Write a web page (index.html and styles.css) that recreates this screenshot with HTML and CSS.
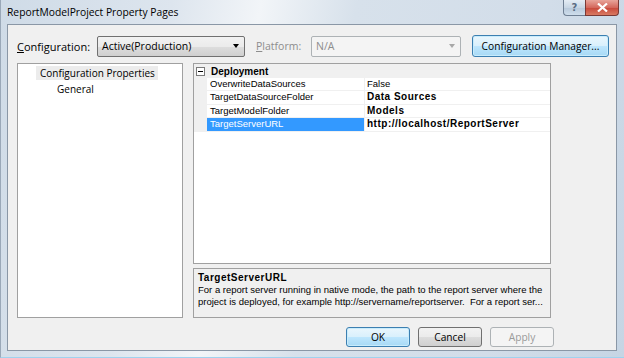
FILE: index.html
```html
<!DOCTYPE html>
<html lang="en">
<head>
    <meta charset="UTF-8">
    <meta name="viewport" content="width=device-width, initial-scale=1.0">
    <title>ReportModelProject Property Pages</title>
    <link rel="stylesheet" href="styles.css">
</head>
<body>

    <div class="window">
        <div class="titlebar">
            <span class="title">ReportModelProject Property Pages</span>
            <div class="caption-buttons">
                <span class="cap-btn help-btn">?</span>
                <span class="cap-btn close-btn">
                    <svg width="11" height="9" viewBox="0 0 11 9">
                        <path d="M1 0.5 L10 8.5 M10 0.5 L1 8.5" stroke="#fff" stroke-width="2.2" fill="none"/>
                    </svg>
                </span>
            </div>
        </div>

        <div class="client">
            <div class="config-row">
                <label class="field-label config-label"><u>C</u>onfiguration:</label>
                <div class="combo config-combo">
                    <span>Active(Production)</span>
                    <span class="combo-arrow"></span>
                </div>
                <label class="field-label platform-label disabled"><u>P</u>latform:</label>
                <div class="combo platform-combo disabled">
                    <span>N/A</span>
                    <span class="combo-arrow"></span>
                </div>
                <button class="btn btn-hot manager-btn">Configuration Manager...</button>
            </div>

            <div class="main">
                <div class="tree">
                    <div class="tree-node selected">Configuration Properties</div>
                    <div class="tree-node child">General</div>
                </div>

                <div class="right-pane">
                    <div class="prop-grid">
                        <div class="cat-row">
                            <span class="expander"></span>
                            <span class="cat-name">Deployment</span>
                        </div>
                        <div class="prop-row">
                            <span class="prop-name">OverwriteDataSources</span>
                            <span class="prop-value">False</span>
                        </div>
                        <div class="prop-row">
                            <span class="prop-name">TargetDataSourceFolder</span>
                            <span class="prop-value bold">Data Sources</span>
                        </div>
                        <div class="prop-row">
                            <span class="prop-name">TargetModelFolder</span>
                            <span class="prop-value bold">Models</span>
                        </div>
                        <div class="prop-row active">
                            <span class="prop-name">TargetServerURL</span>
                            <span class="prop-value bold">http://localhost/ReportServer</span>
                        </div>
                    </div>

                    <div class="description">
                        <div class="desc-title">TargetServerURL</div>
                        <div class="desc-text">For a report server running in native mode, the path to the report server where the</div>
                        <div class="desc-text">project is deployed, for example http://servername/reportserver.&nbsp; For a report ser...</div>
                    </div>
                </div>
            </div>

            <div class="footer">
                <button class="btn btn-hot">OK</button>
                <button class="btn">Cancel</button>
                <button class="btn disabled">Apply</button>
            </div>
        </div>
    </div>

</body>
</html>
```

FILE: styles.css
```css
body {
    margin: 0;
    font-family: "Open Sans", "Liberation Sans", sans-serif;
    font-size: 11px;
    color: #000;
}
.window {
    width: 624px;
    height: 358px;
    box-sizing: border-box;
    padding: 0 7px 6px 7px;
    background: linear-gradient(100deg, #cfdbe7 0%, #dde5ee 25%, #f2f5f8 38%, #d7e1eb 52%, #d2dde9 80%, #c6d5e4 100%);
    border-left: 1px solid #9aa8b8;
    border-bottom: 1px solid #9fd2ee;
    display: flex;
    flex-direction: column;
}
.titlebar {
    height: 24px;
    display: flex;
    align-items: flex-start;
    justify-content: space-between;
}
.title {
    margin-top: 5px;
    margin-left: -1px;
    font-size: 10.3px;
    color: #000;
}
.caption-buttons {
    display: flex;
    margin-right: -2px;
}
.cap-btn {
    height: 16px;
    display: flex;
    align-items: center;
    justify-content: center;
    border: 1px solid #6f7f93;
    border-top: none;
    box-sizing: border-box;
}
.help-btn {
    width: 22px;
    border-radius: 0 0 0 4px;
    border-right: none;
    background: linear-gradient(#e4ecf4, #c8d6e4 50%, #b7c8da 51%, #cfdeec);
    color: #5b6d84;
    font-family: "DejaVu Sans", sans-serif;
    font-weight: bold;
    font-size: 10px;
}
.close-btn {
    width: 34px;
    border-radius: 0 0 4px 0;
    border-color: #7a3a36;
    background: linear-gradient(#e8a59b, #d4685c 50%, #c7473a 51%, #d97a62);
}
.client {
    flex: 1;
    margin-left: -1px;
    background: #f0f0f0;
    border: 1px solid #8a97a6;
    display: flex;
    flex-direction: column;
}
.config-row {
    display: flex;
    align-items: center;
    height: 22px;
    margin-top: 10px;
    padding-left: 9px;
}
.field-label {
    font-size: 11px;
}
.config-label {
    width: 80px;
}
.platform-label {
    width: 55px;
    margin-left: 11px;
    font-size: 10.5px;
}
.disabled {
    color: #8d8d8d;
}
.combo {
    height: 21px;
    box-sizing: border-box;
    border: 1px solid #707070;
    border-radius: 2px;
    background: linear-gradient(#f2f2f2, #ebebeb 50%, #dddddd 51%, #cfcfcf);
    display: flex;
    align-items: center;
    justify-content: space-between;
    padding: 0 5px 0 4px;
    font-size: 10.5px;
}
.config-combo {
    width: 148px;
}
.platform-combo {
    width: 150px;
    background: #f4f4f4;
    border-color: #adb2b5;
}
.combo-arrow {
    width: 0;
    height: 0;
    border-left: 3.5px solid transparent;
    border-right: 3.5px solid transparent;
    border-top: 4px solid #000;
}
.combo.disabled .combo-arrow {
    border-top-color: #a8a8a8;
}
.btn {
    width: 64px;
    height: 20px;
    box-sizing: border-box;
    padding: 0;
    border: 1px solid #707070;
    border-radius: 3px;
    background: linear-gradient(#f2f2f2, #ebebeb 50%, #dddddd 51%, #cfcfcf);
    font-family: "Open Sans", "Liberation Sans", sans-serif;
    font-size: 10.2px;
    color: #000;
}
.btn-hot {
    border-color: #3c7fb1;
    background: linear-gradient(#eaf6fd, #d9f0fc 50%, #bee6fd 51%, #a7d9f5);
    box-shadow: inset 0 0 0 1px #c8ecfc;
}
.btn.disabled {
    border-color: #adb2b5;
    background: #f4f4f4;
    color: #9a9a9a;
}
.manager-btn {
    width: 137px;
    height: 22px;
    margin-left: 11px;
}
.main {
    display: flex;
    margin-top: 6px;
    padding-left: 9px;
    height: 255px;
}
.tree {
    width: 166px;
    box-sizing: border-box;
    border: 1px solid #a0a0a0;
    background: #fff;
    padding-top: 1px;
}
.tree-node {
    height: 14px;
    line-height: 14px;
    font-size: 10px;
    white-space: nowrap;
}
.tree-node.selected {
    display: inline-block;
    margin-left: 18px;
    padding: 0 3px 0 4px;
    background: #ececec;
}
.tree-node.child {
    padding-left: 39px;
    margin-top: 2px;
}
.right-pane {
    width: 358px;
    margin-left: 10px;
    display: flex;
    flex-direction: column;
    gap: 4px;
}
.prop-grid {
    height: 201px;
    box-sizing: border-box;
    border: 1px solid #a0a0a0;
    background: #fff;
    font-family: "Liberation Sans", Arial, sans-serif;
    font-size: 9.5px;
}
.cat-row {
    height: 14px;
    background: #f0f0f0;
    display: flex;
    align-items: center;
}
.expander {
    width: 9px;
    height: 9px;
    box-sizing: border-box;
    margin-left: 2px;
    border: 1px solid #7a7a7a;
    background: #fff;
    position: relative;
}
.expander::after {
    content: "";
    position: absolute;
    left: 1px;
    top: 3px;
    width: 5px;
    height: 1px;
    background: #000;
}
.cat-name {
    margin-left: 6px;
    font-size: 10px;
    font-weight: bold;
}
.prop-row {
    height: 13.4px;
    box-sizing: border-box;
    display: flex;
    border-left: 13px solid #f0f0f0;
    border-bottom: 1px solid #f0f0f0;
}
.prop-name {
    width: 158px;
    box-sizing: border-box;
    padding-left: 3px;
    line-height: 12px;
    border-right: 1px solid #f0f0f0;
    white-space: nowrap;
}
.prop-value {
    padding-left: 2px;
    line-height: 12px;
    white-space: nowrap;
}
.bold {
    font-size: 10px;
    font-weight: bold;
    letter-spacing: 0.5px;
}
.prop-row.active .prop-name {
    background: #3399ff;
    color: #fff;
}
.description {
    height: 50px;
    box-sizing: border-box;
    border: 1px solid #a0a0a0;
    background: #f0f0f0;
    padding: 2px 4px;
    font-family: "Liberation Sans", Arial, sans-serif;
    font-size: 9.5px;
    overflow: hidden;
}
.desc-title {
    font-size: 10px;
    font-weight: bold;
    letter-spacing: 0.5px;
    line-height: 13px;
}
.desc-text {
    line-height: 11.5px;
    white-space: nowrap;
}
.footer {
    display: flex;
    justify-content: flex-end;
    gap: 8px;
    margin-top: 9px;
    padding-right: 62px;
}
```
